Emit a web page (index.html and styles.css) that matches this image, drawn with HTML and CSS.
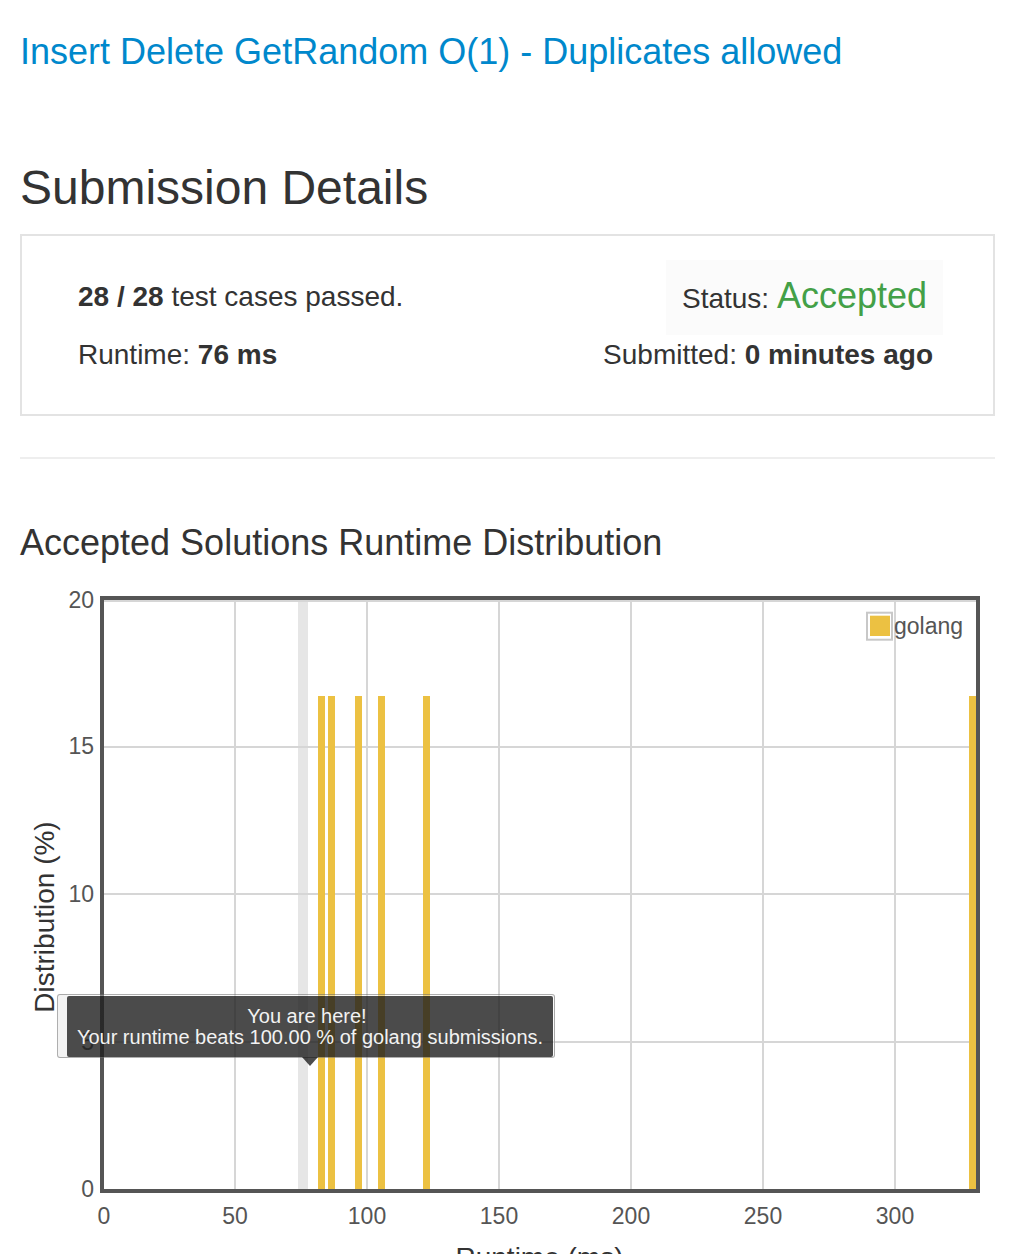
FILE: index.html
```html
<!DOCTYPE html>
<html>
<head>
<meta charset="utf-8">
<link rel="stylesheet" href="styles.css">
</head>
<body>
<div class="page">
  <h4 class="title"><a href="#">Insert Delete GetRandom O(1) - Duplicates allowed</a></h4>
  <h1 class="heading">Submission Details</h1>
  <div class="card">
    <div class="row row-top">
      <div class="left-cell"><strong>28 / 28</strong> test cases passed.</div>
      <div class="status-box">Status: <span class="accepted">Accepted</span></div>
    </div>
    <div class="row row-bottom">
      <div class="left-cell">Runtime: <strong>76 ms</strong></div>
      <div class="right-cell">Submitted: <strong>0 minutes ago</strong></div>
    </div>
  </div>
  <hr class="divider">
  <h3 class="subheading">Accepted Solutions Runtime Distribution</h3>
  <div class="chart">
    <svg class="chart-svg" width="975" height="674" viewBox="0 0 975 674">
      <rect x="84" y="20" width="872" height="589" fill="#fff"/>
      <rect x="278" y="20" width="10" height="589" fill="#e6e6e6"/>
      <g fill="#d6d6d6">
        <rect x="84" y="20" width="872" height="2"/>
        <rect x="84" y="166" width="872" height="2"/>
        <rect x="84" y="313" width="872" height="2"/>
        <rect x="84" y="461" width="872" height="2"/>
        <rect x="214" y="20" width="2" height="589"/>
        <rect x="346" y="20" width="2" height="589"/>
        <rect x="478" y="20" width="2" height="589"/>
        <rect x="610" y="20" width="2" height="589"/>
        <rect x="742" y="20" width="2" height="589"/>
        <rect x="874" y="20" width="2" height="589"/>
      </g>
      <g fill="#ecc142">
        <rect x="298" y="116" width="7" height="493"/>
        <rect x="308" y="116" width="7" height="493"/>
        <rect x="335" y="116" width="7" height="493"/>
        <rect x="358" y="116" width="7" height="493"/>
        <rect x="403" y="116" width="7" height="493"/>
        <rect x="949" y="116" width="7" height="493"/>
      </g>
      <rect x="82" y="18" width="876" height="593" fill="none" stroke="#555" stroke-width="4"/>
      <g class="tick" text-anchor="end">
        <text x="74" y="28">20</text>
        <text x="74" y="174">15</text>
        <text x="74" y="322">10</text>
        <text x="74" y="470">5</text>
        <text x="74" y="617">0</text>
      </g>
      <g class="tick" text-anchor="middle">
        <text x="84" y="644">0</text>
        <text x="215" y="644">50</text>
        <text x="347" y="644">100</text>
        <text x="479" y="644">150</text>
        <text x="611" y="644">200</text>
        <text x="743" y="644">250</text>
        <text x="875" y="644">300</text>
      </g>
      <text class="axis-label" text-anchor="middle" transform="translate(33.5,337) rotate(-90)">Distribution (%)</text>
      <text class="axis-label" text-anchor="middle" x="519.5" y="687">Runtime (ms)</text>
      <rect x="847" y="32.7" width="25" height="27" fill="#fff" stroke="#c8c8c8" stroke-width="2"/>
      <rect x="850" y="35.7" width="20" height="20.3" fill="#ecc142"/>
      <text class="legend" x="874" y="54">golang</text>
    </svg>
    <div class="tooltip">
      <div class="tooltip-inner">
        <div class="tooltip-line1">You are here!</div>
        <div>Your runtime beats 100.00 % of golang submissions.</div>
      </div>
    </div>
    <div class="tooltip-arrow"></div>
  </div>
</div>
</body>
</html>
```

FILE: styles.css
```css
html, body {
  margin: 0;
  padding: 0;
  overflow: hidden;
  background: #fff;
}
body {
  font-family: "Liberation Sans", Arial, Helvetica, sans-serif;
  color: #333;
}
.page {
  padding: 0 16px 0 20px;
}
.title {
  margin: 32px 0 0;
  font-size: 36px;
  line-height: 40px;
  font-weight: normal;
}
.title a {
  color: #0088cc;
  text-decoration: none;
}
.heading {
  margin: 89px 0 0;
  font-size: 48px;
  line-height: 53px;
  font-weight: normal;
}
.card {
  margin-top: 20px;
  border: 2px solid #e3e3e3;
  padding: 24px 0 39px;
  font-size: 28px;
}
.row {
  display: flex;
  justify-content: space-between;
}
.row-top {
  height: 75px;
}
.row-bottom {
  height: 40px;
  line-height: 40px;
}
.left-cell {
  padding-left: 56px;
}
.row-top .left-cell {
  margin-top: 17px;
  line-height: 40px;
}
.status-box {
  margin-right: 50px;
  width: 277px;
  box-sizing: border-box;
  height: 75px;
  padding: 18px 16px 0 0;
  text-align: right;
  line-height: 1;
  background: #fbfbfb;
}
.accepted {
  font-size: 36px;
  line-height: 1;
  color: #43a047;
}
.right-cell {
  padding-right: 60px;
}
.divider {
  margin: 41px 0 0;
  border: 0;
  height: 2px;
  background: #eee;
}
.subheading {
  margin: 64px 0 0;
  font-size: 36px;
  line-height: 40px;
  font-weight: normal;
}
.chart {
  position: relative;
  margin-top: 17px;
  width: 975px;
  height: 674px;
}
.chart-svg {
  display: block;
  overflow: hidden;
}
.tick {
  font-family: "Liberation Sans", Arial, sans-serif;
  font-size: 23px;
  fill: #555;
}
.axis-label {
  font-family: "Liberation Sans", Arial, sans-serif;
  font-size: 28px;
  fill: #333;
}
.legend {
  font-family: "Liberation Sans", Arial, sans-serif;
  font-size: 23px;
  fill: #555;
}
.tooltip {
  position: absolute;
  left: 37px;
  top: 414px;
  width: 498px;
  height: 64px;
  box-sizing: border-box;
  border: 1px solid rgba(0, 0, 0, 0.3);
  border-radius: 3px;
  background: linear-gradient(to right, rgba(242, 242, 242, 0.92) 0, rgba(242, 242, 242, 0.92) 9px, rgba(242, 242, 242, 0.35) 9px);
  padding: 1px 1px 0 9px;
}
.tooltip-inner {
  height: 61px;
  background: rgba(0, 0, 0, 0.7);
  color: #f2f2f2;
  font-size: 20px;
  line-height: 21px;
  text-align: center;
  display: flex;
  flex-direction: column;
  justify-content: center;
  border-radius: 2px;
}
.tooltip-line1 {
  padding-right: 6px;
}
.tooltip-arrow {
  position: absolute;
  left: 282px;
  top: 477px;
  width: 0;
  height: 0;
  border-left: 8px solid transparent;
  border-right: 8px solid transparent;
  border-top: 9px solid rgba(0, 0, 0, 0.7);
}
```
